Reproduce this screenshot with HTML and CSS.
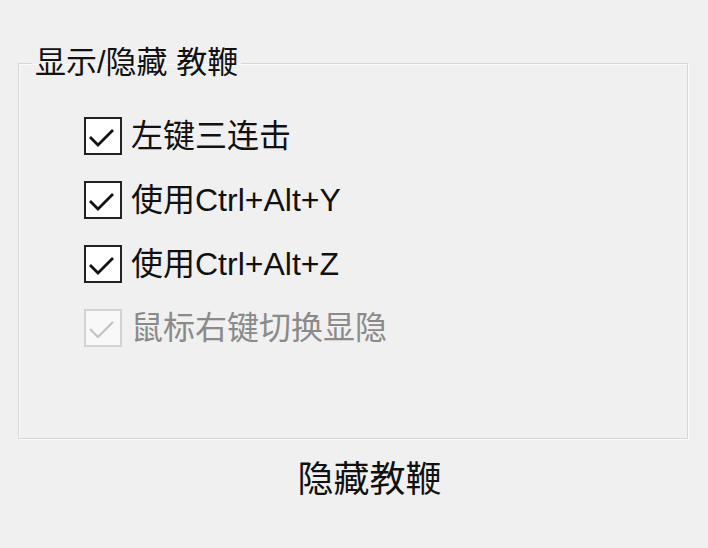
FILE: index.html
```html
<!DOCTYPE html>
<html lang="zh-CN">
<head>
<meta charset="utf-8">
<link rel="stylesheet" href="styles.css">
</head>
<body>
<div class="dialog">
  <fieldset class="group">
    <legend class="group-title">显示/隐藏 教鞭</legend>
    <div class="options">
      <label class="option">
        <span class="box"><svg viewBox="0 0 34 34" class="tick"><path d="M4 18 L12 26 L27 11"/></svg></span>
        <span class="label">左键三连击</span>
      </label>
      <label class="option">
        <span class="box"><svg viewBox="0 0 34 34" class="tick"><path d="M4 18 L12 26 L27 11"/></svg></span>
        <span class="label">使用Ctrl+Alt+Y</span>
      </label>
      <label class="option">
        <span class="box"><svg viewBox="0 0 34 34" class="tick"><path d="M4 18 L12 26 L27 11"/></svg></span>
        <span class="label">使用Ctrl+Alt+Z</span>
      </label>
      <label class="option disabled">
        <span class="box"><svg viewBox="0 0 34 34" class="tick"><path d="M4 18 L12 26 L27 11"/></svg></span>
        <span class="label">鼠标右键切换显隐</span>
      </label>
    </div>
  </fieldset>
  <div class="footer">
    <button class="action">隐藏教鞭</button>
  </div>
</div>
</body>
</html>
```

FILE: styles.css
```css
html, body {
  margin: 0;
  padding: 0;
  background: #f0f0f0;
}
body {
  width: 708px;
  height: 548px;
  overflow: hidden;
  font-family: "Liberation Sans", "Noto Sans CJK SC", sans-serif;
  color: #111;
}
.dialog {
  padding: 45px 20px 0 18px;
}
.group {
  margin: 0;
  padding: 0 0 91px 65px;
  border: 1px solid #d6d6d6;
  box-shadow: inset 1px 1px 0 #fbfbfb, 1px 1px 0 #fbfbfb;
  min-width: 0;
}
.group-title {
  margin-left: -52px;
  padding: 0 3px;
  font-size: 31px;
  line-height: 36px;
  height: 36px;
  color: #111;
}
.options {
  padding-top: 36px;
  display: flex;
  flex-direction: column;
  gap: 26px;
}
.option {
  display: flex;
  align-items: center;
  gap: 9px;
  height: 38px;
}
.box {
  width: 38px;
  height: 38px;
  box-sizing: border-box;
  border: 2px solid #222;
  background: #fff;
  display: flex;
}
.tick {
  width: 34px;
  height: 34px;
}
.tick path {
  fill: none;
  stroke: #111;
  stroke-width: 2.8;
}
.label {
  font-size: 32px;
  line-height: 38px;
}
.disabled .box {
  border-color: #d2d2d2;
  background: #f8f8f8;
}
.disabled .tick path {
  stroke: #c0c0c0;
  stroke-width: 2;
}
.disabled .label {
  color: #8a8a8a;
}
.footer {
  display: flex;
  justify-content: center;
  padding: 18px 0 0 33px;
}
.action {
  background: none;
  border: none;
  padding: 0;
  font-family: "Liberation Sans", "Noto Sans CJK SC", sans-serif;
  font-size: 36px;
  line-height: 46px;
  color: #111;
}
```
